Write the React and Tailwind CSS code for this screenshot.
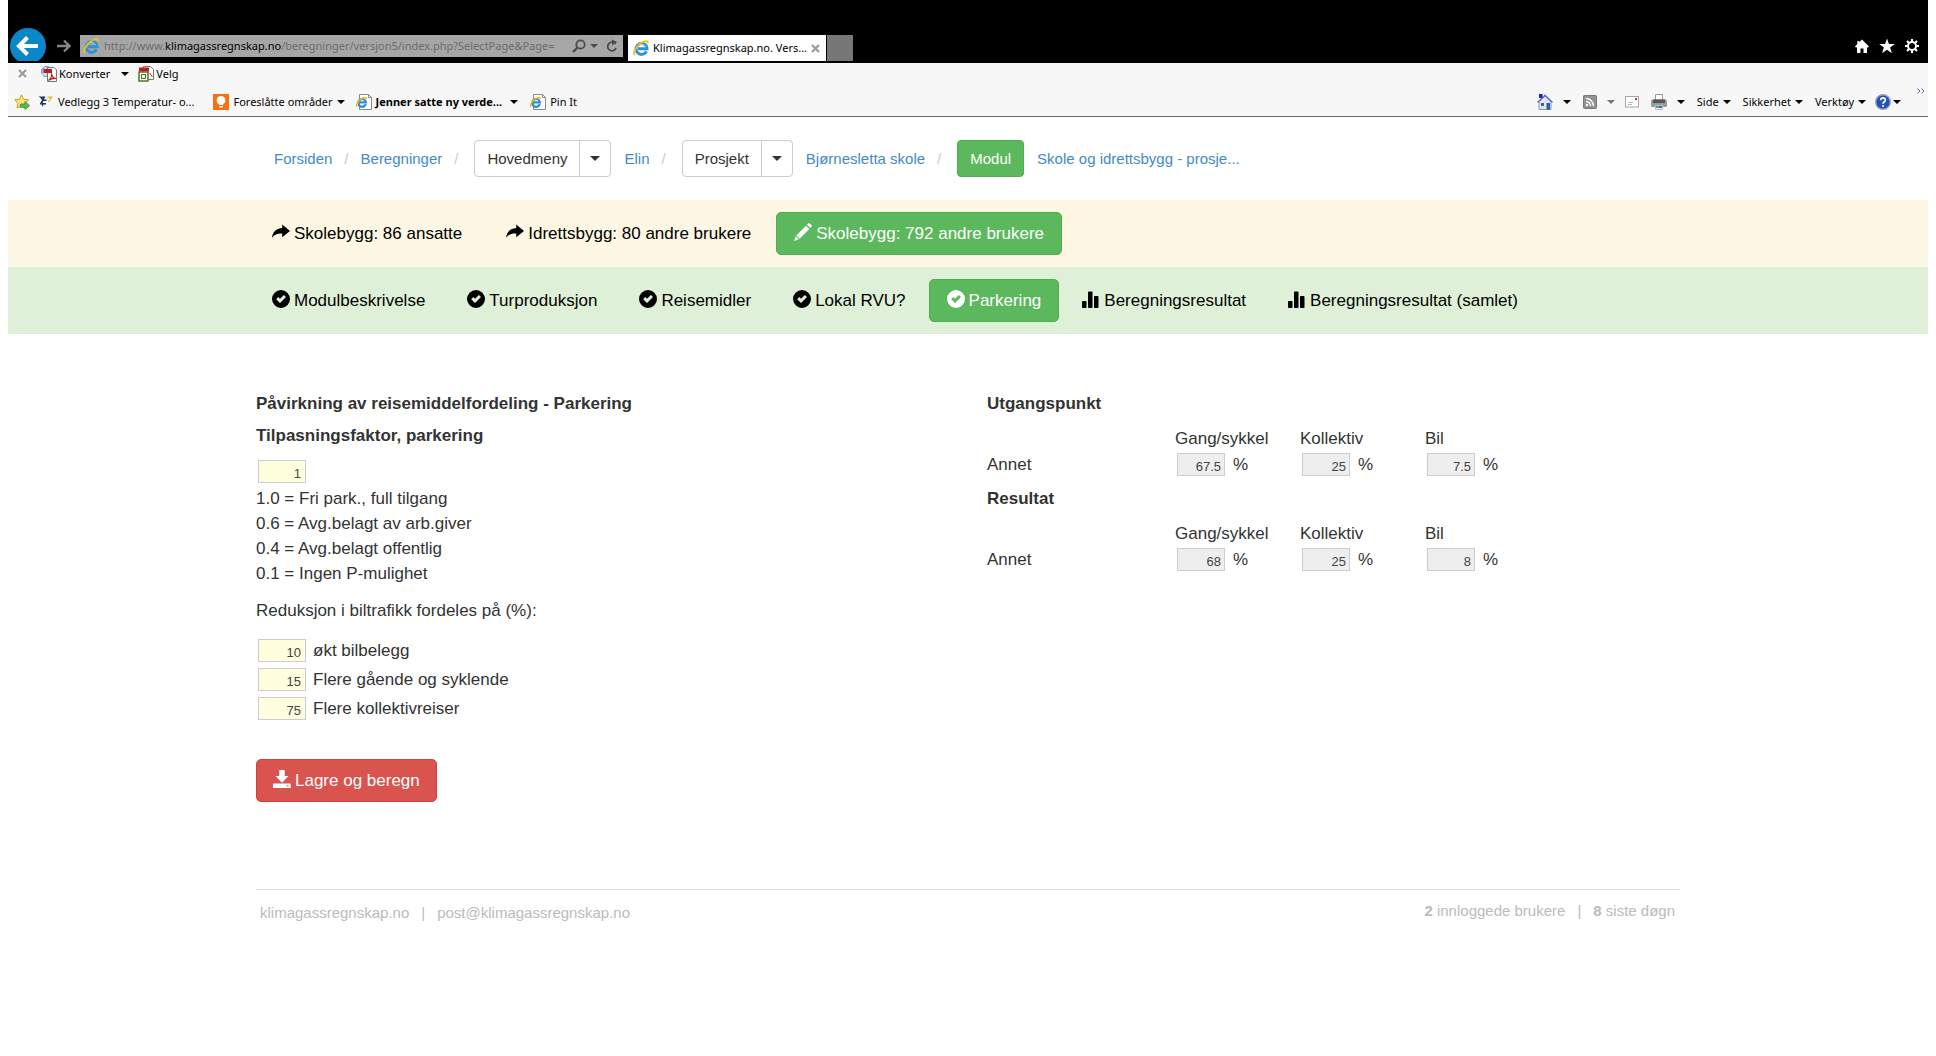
import { useState } from "react";

const moduleTabs = [
  { label: "Skolebygg: 86 ansatte", icon: ShareIcon },
  { label: "Idrettsbygg: 80 andre brukere", icon: ShareIcon },
  { label: "Skolebygg: 792 andre brukere", icon: PencilIcon, active: true },
];

const stepTabs = [
  { label: "Modulbeskrivelse", icon: CheckIcon },
  { label: "Turproduksjon", icon: CheckIcon },
  { label: "Reisemidler", icon: CheckIcon },
  { label: "Lokal RVU?", icon: CheckIcon },
  { label: "Parkering", icon: CheckIcon, active: true },
  { label: "Beregningsresultat", icon: StatsIcon },
  { label: "Beregningsresultat (samlet)", icon: StatsIcon },
];

const factorHelp = [
  "1.0 = Fri park., full tilgang",
  "0.6 = Avg.belagt av arb.giver",
  "0.4 = Avg.belagt offentlig",
  "0.1 = Ingen P-mulighet",
];

const reductionFields = [
  { id: "bilbelegg", label: "økt bilbelegg", value: "10" },
  { id: "gaende", label: "Flere gående og syklende", value: "15" },
  { id: "kollektiv", label: "Flere kollektivreiser", value: "75" },
];

const modes = ["Gang/sykkel", "Kollektiv", "Bil"];

/* ---------- icons ---------- */

function Glyph({ children }) {
  return (
    <svg viewBox="0 0 18 18" className="mb-[3px] h-[18px] w-[18px] shrink-0" fill="currentColor" aria-hidden="true">
      {children}
    </svg>
  );
}

function ShareIcon() {
  return (
    <Glyph>
      <path d="M10.2 1.500 18 8 10.2 14.200V10.6C5.6 10.4 2.6 11.4 0 14.800 .6 9.2 4 5.500 10.2 5Z" />
    </Glyph>
  );
}

function PencilIcon() {
  return (
    <Glyph>
      <path d="M14.3.4Q15 -.2 15.700.4L17.600 2.300Q18.200 3 17.600 3.700L16.200 5.100 12.900 1.800ZM12 2.700 15.300 6 5.600 15.700 2.300 12.400ZM1.700 13.200 4.800 16.300 0 18Z" />
    </Glyph>
  );
}

function CheckIcon() {
  return (
    <Glyph>
      <path
        fillRule="evenodd"
        d="M9 0A9 9 0 1 1 9 18 9 9 0 0 1 9 0ZM4.200 9.200 8 13 14 7 11.900 4.900 8 8.800 6.300 7.100Z"
      />
    </Glyph>
  );
}

function StatsIcon() {
  return (
    <Glyph>
      <rect x="0" y="11" width="4.500" height="7" rx=".8" />
      <rect x="6" y="1.500" width="4.500" height="16.500" rx=".8" />
      <rect x="12" y="6" width="4.500" height="12" rx=".8" />
    </Glyph>
  );
}

function SaveIcon() {
  return (
    <Glyph>
      <path d="M6.300 0H11.700V6H15.500L9 12.800 2.500 6H6.300Z" />
      <path fillRule="evenodd" d="M.5 13.500H17.500L18 18.200H0V14ZM13.500 15.300V16.300H15.500V15.300Z" />
    </Glyph>
  );
}

function Caret({ className = "text-black" }) {
  return (
    <svg viewBox="0 0 8 4" className={`h-1 w-2 shrink-0 ${className}`} fill="currentColor" aria-hidden="true">
      <path d="M0 0H8L4 4Z" />
    </svg>
  );
}

function IeLogo() {
  return (
    <svg viewBox="0 0 16 16" className="h-4 w-4 shrink-0" fill="none" aria-hidden="true">
      <path d="M13.400 11.400A5.500 5.500 0 1 1 14 8.800H5" stroke="#2e93d6" strokeWidth="3" />
      <path d="M12.800 7.200A4.700 4.700 0 0 0 4.400 6.500" stroke="#8ccdf2" strokeWidth="1" />
      <path d="M2.200 15C-.8 14 2.500 7.500 7 4 11 .8 15.200 -.2 14.800 3.400" stroke="#f5bd1a" strokeWidth="1.800" />
    </svg>
  );
}

function PageIcon() {
  return (
    <svg viewBox="0 0 16 16" className="h-4 w-4 shrink-0" fill="none" aria-hidden="true">
      <path d="M3.500.5H12.500L15.500 3.500V15.500H3.500Z" fill="#fff" stroke="#8b8b8b" />
      <path d="M12.500.5V3.500H15.500" stroke="#8b8b8b" />
      <path d="M9.800 10.200A3.900 3.900 0 1 1 10 8.300H3.500" stroke="#2e8fd4" strokeWidth="2.200" />
      <path d="M1 13C-.5 12 1.500 7.500 5 5.200 8 3 10.500 2.800 10.400 5" stroke="#f2b91d" strokeWidth="1.400" />
    </svg>
  );
}

function PdfConvertIcon() {
  return (
    <svg viewBox="0 0 16 16" className="h-4 w-4 shrink-0" fill="none" aria-hidden="true">
      <circle cx="5.500" cy="5.500" r="5" fill="#a9c5ea" stroke="#5f86bd" />
      <path d="M1 8H10M4 1V10" stroke="#e6effa" />
      <path d="M6.500 1.500H13L15.500 4V15.500H6.500Z" fill="#fff" stroke="#777" />
      <path d="M2.500 3H11V7H2.500Z" fill="#c4161c" />
      <path d="M7.500 14.500C10.500 12 11 9.500 10.500 7.500 11 11 13 12.300 15 12.500 12 11.800 10 12.700 7.500 14.500Z" stroke="#c4161c" strokeWidth="1.200" />
    </svg>
  );
}

function PdfSelectIcon() {
  return (
    <svg viewBox="0 0 16 16" className="h-4 w-4 shrink-0" fill="none" aria-hidden="true">
      <path d="M5.500.5H12.500L15.500 3.500V13.500H5.500Z" fill="#fff" stroke="#777" />
      <path d="M1 1.500H11V5.500H1Z" fill="#c4161c" />
      <path d="M11.500 7 14.500 11" stroke="#c4161c" />
      <rect x="1" y="6" width="9" height="9" fill="#fff" stroke="#4b7a25" strokeWidth="1.500" />
      <rect x="3.500" y="8.500" width="4" height="4" stroke="#4b7a25" />
    </svg>
  );
}

function FavoriteIcon() {
  return (
    <svg viewBox="0 0 16 16" className="h-4 w-4 shrink-0" aria-hidden="true">
      <path
        d="M7.500.8 9.600 5.300 14.500 5.800 11 9.300 12 14 7.500 11.800 3 14 4 9.300.6 5.800 5.400 5.300Z"
        fill="#fce37a"
        stroke="#d79a1c"
      />
      <path d="M6.500 10H11V7.500L15.600 11.700 11 15.500V13.300H6.500Z" fill="#5cc04b" stroke="#2c8a2c" strokeWidth=".8" />
    </svg>
  );
}

function VedleggIcon() {
  return (
    <svg viewBox="0 0 16 16" className="h-4 w-4 shrink-0" aria-hidden="true">
      <path d="M.5 2.500H7.500L6 5.500H8.500V7H5.500L4.500 9H8V10.500H5.500L4.500 13 3.800 10.500H2V9.500L4 6 2.500 4Z" fill="#23395b" />
      <path d="M10 2.500H15L11 8H9.800L12 4H9Z" fill="#e5b92c" />
    </svg>
  );
}

function BulbIcon() {
  return (
    <svg viewBox="0 0 16 16" className="h-4 w-4 shrink-0" aria-hidden="true">
      <rect width="16" height="16" fill="#f9700f" />
      <path d="M8 2A4.300 4.300 0 0 1 10.200 10V11H5.800V10A4.300 4.300 0 0 1 8 2ZM6.300 12H9.700V13.500H6.300Z" fill="#fff" />
    </svg>
  );
}

function HouseIcon() {
  return (
    <svg viewBox="0 0 16 16" className="h-4 w-4 shrink-0" aria-hidden="true">
      <path d="M2 8 8 2 14 8V15.500H2Z" fill="#dfe6f2" stroke="#8a97ad" />
      <path d="M.5 8.500 8 1.200 15.500 8.500" fill="none" stroke="#5d74c3" strokeWidth="1.500" />
      <path d="M2 0H5.500V4H2Z" fill="#2222bb" />
      <rect x="4" y="9" width="3" height="3" fill="#555f70" />
      <rect x="9.500" y="9" width="3.500" height="6.500" fill="#2460b0" />
    </svg>
  );
}

function FeedIcon() {
  return (
    <svg viewBox="0 0 14 14" className="h-[14px] w-[14px] shrink-0" fill="none" aria-hidden="true">
      <rect x=".5" y=".5" width="13" height="13" rx="1" fill="#929292" stroke="#777" />
      <path d="M3 6.500A4.500 4.500 0 0 1 7.500 11M3 3.500A7.500 7.500 0 0 1 10.500 11" stroke="#fff" strokeWidth="1.400" />
      <circle cx="4" cy="10" r="1.200" fill="#fff" />
    </svg>
  );
}

function MailIcon() {
  return (
    <svg viewBox="0 0 14 12" className="h-3 w-[14px] shrink-0" fill="none" aria-hidden="true">
      <rect x=".5" y=".5" width="13" height="10.500" fill="#fff" stroke="#a5a5a5" />
      <rect x="10" y="2" width="2" height="2" fill="#d8262b" />
      <path d="M3 6.500H8M3 8.500H7" stroke="#b8b8b8" />
    </svg>
  );
}

function PrinterIcon() {
  return (
    <svg viewBox="0 0 16 16" className="h-4 w-4 shrink-0" aria-hidden="true">
      <path d="M4.500.5H11.500V6H4.500Z" fill="#fff" stroke="#999" />
      <rect x="0" y="5.500" width="16" height="7.500" rx="1.500" fill="#9a9a9a" />
      <rect x="2" y="5.500" width="12" height="3.500" fill="#555" />
      <path d="M4.500 11.500H11.500V15.500H4.500Z" fill="#fff" stroke="#bbb" />
      <path d="M5 12H8V14H5Z" fill="#3fae79" />
      <path d="M8 12H11V14H8Z" fill="#3a6fd0" />
    </svg>
  );
}

function HelpIcon() {
  return (
    <svg viewBox="0 0 16 16" className="h-4 w-4 shrink-0" fill="none" aria-hidden="true">
      <circle cx="8" cy="8" r="7.300" fill="#2350b8" stroke="#9aa3b5" strokeWidth="1.400" />
      <path d="M5.700 6.200C5.700 3.200 10.400 3.300 10.400 6 10.400 7.700 8 7.800 8 9.700" stroke="#fff" strokeWidth="1.700" />
      <circle cx="8" cy="12" r="1.100" fill="#fff" />
    </svg>
  );
}

function CloseIcon() {
  return (
    <svg viewBox="0 0 9 9" className="h-[9px] w-[9px] shrink-0" stroke="#9b9b9b" strokeWidth="2.200" aria-hidden="true">
      <path d="M1 1 8 8M8 1 1 8" />
    </svg>
  );
}

/* ---------- browser window ---------- */

function TitleBar() {
  return (
    <div className="flex h-[63px] items-end bg-black pb-[2px] pl-[2px] pr-[9px]">
      <button type="button" aria-label="Tilbake">
        <svg viewBox="0 0 36 33" className="h-[33px] w-9" fill="none">
          <circle cx="18" cy="18" r="18" fill="#0a87c9" />
          <path d="M28 18H10M17.500 9.500 9 18 17.500 26.500" stroke="#fff" strokeWidth="4" />
        </svg>
      </button>
      <button type="button" aria-label="Frem" className="mb-2 ml-[11px]">
        <svg viewBox="0 0 14 14" className="h-[14px] w-[14px]" fill="none">
          <path d="M0 7H12M7 1.500 12.500 7 7 12.500" stroke="#858585" strokeWidth="2.400" />
        </svg>
      </button>
      <div className="mb-1 ml-[9px] flex h-[22px] w-[543px] items-center bg-[#a6a6a6] pl-[3px] pr-[5px]">
        <IeLogo />
        <div
          role="textbox"
          aria-label="Adresse"
          className="ml-[5px] min-w-0 flex-1 overflow-hidden whitespace-nowrap text-[11px] leading-5 text-[#6d6d6d]"
        >
          http://www.<span className="text-black">klimagassregnskap.no</span>
          /beregninger/versjon5/index.php?SelectPage&amp;Page=
        </div>
        <button type="button" aria-label="Søk" className="ml-[5px]">
          <svg viewBox="0 0 14 14" className="h-[14px] w-[14px]" fill="none" stroke="#4b4b4b">
            <circle cx="8.500" cy="5.500" r="4.200" strokeWidth="1.800" />
            <path d="M5.500 8.500 1 13" strokeWidth="2.400" />
          </svg>
        </button>
        <button type="button" aria-label="Vis adresser" className="ml-1">
          <Caret className="text-[#4b4b4b]" />
        </button>
        <button type="button" aria-label="Oppdater" className="ml-2">
          <svg viewBox="0 0 12 14" className="h-[14px] w-3" fill="none">
            <path d="M9.500 5A4.300 4.300 0 1 0 10 9" stroke="#4b4b4b" strokeWidth="1.800" />
            <path d="M6 .5V6.500L11 3Z" fill="#4b4b4b" />
          </svg>
        </button>
      </div>
      <div className="ml-[5px] flex h-[26px] w-[198px] items-center bg-white pl-[5px] pr-[6px]">
        <IeLogo />
        <span className="ml-1 flex-1 whitespace-nowrap text-[11px] leading-5 text-black">
          Klimagassregnskap.no. Vers...
        </span>
        <button type="button" aria-label="Lukk fane">
          <CloseIcon />
        </button>
      </div>
      <button type="button" aria-label="Ny fane" className="ml-px h-[26px] w-[26px] bg-[#777]" />
      <div className="mb-[7px] ml-auto flex items-center gap-[10px] text-white">
        <button type="button" aria-label="Hjem">
          <svg viewBox="0 0 14 14" className="h-[14px] w-[14px]" fill="currentColor">
            <path d="M7 .5 14 7.500 12.800 8.800 12 8V14H8.500V9.500H5.500V14H2V8L1.200 8.800 0 7.500 2.300 5V2H4.300V3.200Z" />
          </svg>
        </button>
        <button type="button" aria-label="Favoritter">
          <svg viewBox="0 0 16 16" className="h-4 w-4" fill="currentColor">
            <path d="M8 .5 9.900 6H15.800L11.100 9.500 12.900 15.200 8 11.700 3.100 15.200 4.900 9.500.2 6H6.100Z" />
          </svg>
        </button>
        <button type="button" aria-label="Innstillinger">
          <svg viewBox="0 0 14 14" className="h-[14px] w-[14px]" fill="none" stroke="currentColor">
            <circle cx="7" cy="7" r="4" strokeWidth="2" />
            <path
              d="M7 0V2.500M7 11.500V14M0 7H2.500M11.500 7H14M2 2 3.800 3.800M10.200 10.200 12 12M12 2 10.200 3.800M3.800 10.200 2 12"
              strokeWidth="2"
            />
          </svg>
        </button>
      </div>
    </div>
  );
}

function BrowserToolbars() {
  return (
    <div className="border-b border-[#696969] bg-[#f7f7f7] text-[11px] leading-4 text-black">
      <div className="flex h-[21px] items-center pl-[10px]">
        <button type="button" aria-label="Lukk verktøylinje">
          <CloseIcon />
        </button>
        <button type="button" className="ml-[14px] flex items-center gap-[2px]">
          <PdfConvertIcon />
          Konverter
          <span className="ml-[9px]">
            <Caret />
          </span>
        </button>
        <button type="button" className="ml-[9px] flex items-center gap-[2px]">
          <PdfSelectIcon />
          Velg
        </button>
      </div>
      <div className="flex h-8 items-center pl-[6px] pt-1">
        <button type="button" aria-label="Legg til favoritt">
          <FavoriteIcon />
        </button>
        <a href="#vedlegg" className="ml-2 flex items-center gap-1">
          <VedleggIcon />
          Vedlegg 3 Temperatur- o...
        </a>
        <button type="button" className="ml-[19px] flex items-center gap-1">
          <BulbIcon />
          Foreslåtte områder
          <Caret />
        </button>
        <button type="button" className="ml-[11px] flex items-center gap-1 font-bold">
          <PageIcon />
          Jenner satte ny verde...
          <span className="ml-1">
            <Caret />
          </span>
        </button>
        <a href="#pin" className="ml-3 flex items-center gap-1">
          <PageIcon />
          Pin It
        </a>

        <div className="ml-auto flex h-full items-center pr-[3px]">
          <button type="button" aria-label="Startside" className="flex items-center gap-[10px]">
            <HouseIcon />
            <Caret />
          </button>
          <button type="button" aria-label="Feeder" className="ml-3 flex items-center gap-[10px]">
            <FeedIcon />
            <Caret className="text-[#777]" />
          </button>
          <button type="button" aria-label="Les e-post" className="ml-[10px]">
            <MailIcon />
          </button>
          <button type="button" aria-label="Skriv ut" className="ml-3 flex items-center gap-[10px]">
            <PrinterIcon />
            <Caret />
          </button>
          <button type="button" className="ml-3 flex items-center gap-1">
            Side
            <Caret />
          </button>
          <button type="button" className="ml-3 flex items-center gap-1">
            Sikkerhet
            <Caret />
          </button>
          <button type="button" className="ml-3 flex items-center gap-1">
            Verktøy
            <Caret />
          </button>
          <button type="button" aria-label="Hjelp" className="ml-[9px] flex items-center gap-[2px]">
            <HelpIcon />
            <Caret />
          </button>
          <button type="button" aria-label="Flere kommandoer" className="ml-4 self-start">
            <svg viewBox="0 0 8 6" className="h-[6px] w-2" fill="none" stroke="#6d6db5">
              <path d="M.5.5 3 3 .5 5.500M4.500.5 7 3 4.500 5.500" />
            </svg>
          </button>
        </div>
      </div>
    </div>
  );
}

/* ---------- page ---------- */

function Slash() {
  return <span className="px-3 text-[#ccc]">/</span>;
}

function SplitButton({ label }) {
  return (
    <div className="ml-1 mr-[13px] flex h-[37px] rounded border border-[#ccc] bg-white text-[#333]">
      <button type="button" className="px-3">
        {label}
      </button>
      <button type="button" aria-label={`Åpne ${label}`} className="flex items-center border-l border-[#ccc] px-[10px]">
        <svg viewBox="0 0 10 5" className="h-[5px] w-[10px]" fill="currentColor">
          <path d="M0 0H10L5 5Z" />
        </svg>
      </button>
    </div>
  );
}

function Breadcrumb() {
  return (
    <nav className="mx-auto flex h-[83px] w-full max-w-[1424px] items-center pl-[18px] text-[15px] leading-[21px] text-[#428bca]">
      <a href="#forsiden">Forsiden</a>
      <Slash />
      <a href="#beregninger">Beregninger</a>
      <Slash />
      <SplitButton label="Hovedmeny" />
      <a href="#elin">Elin</a>
      <Slash />
      <SplitButton label="Prosjekt" />
      <a href="#skole">Bjørnesletta skole</a>
      <Slash />
      <button type="button" className="ml-1 mr-[13px] h-[37px] rounded border border-[#4cae4c] bg-[#5cb85c] px-3 text-white">
        Modul
      </button>
      <a href="#modul">Skole og idrettsbygg - prosje...</a>
    </nav>
  );
}

function TabBar({ tabs, className, gap }) {
  return (
    <div className={className}>
      <nav className={`mx-auto flex h-[67px] w-full max-w-[1430px] items-center ${gap}`}>
        {tabs.map(({ label, icon: Icon, active }) => (
          <a
            key={label}
            href="#tab"
            aria-current={active ? "page" : undefined}
            className={
              active
                ? "flex h-[43px] items-center gap-1 rounded-[5px] border border-[#4cae4c] bg-[#5cb85c] px-[17px] text-white"
                : "flex h-[43px] items-center gap-1 border border-transparent px-[18px] text-black"
            }
          >
            <Icon />
            {label}
          </a>
        ))}
      </nav>
    </div>
  );
}

function NumberField({ id, value, onChange }) {
  return (
    <input
      id={id}
      type="text"
      value={value}
      onChange={(e) => onChange(e.target.value)}
      className="ml-[2px] block h-[23px] w-12 border border-[#ccc] bg-[#ffffe0] pr-1 pt-1 text-right text-[13px] leading-4 text-[#444]"
    />
  );
}

function ParkingForm() {
  const [factor, setFactor] = useState("1");
  const [fields, setFields] = useState(reductionFields);

  const updateField = (id, value) =>
    setFields(fields.map((f) => (f.id === id ? { ...f, value } : f)));

  return (
    <form onSubmit={(e) => e.preventDefault()}>
      <h1 className="font-bold">Påvirkning av reisemiddelfordeling - Parkering</h1>
      <label htmlFor="faktor" className="mb-3 mt-[7px] block font-bold">
        Tilpasningsfaktor, parkering
      </label>
      <NumberField id="faktor" value={factor} onChange={setFactor} />
      <div className="mt-[3px]">
        {factorHelp.map((line) => (
          <p key={line}>{line}</p>
        ))}
      </div>
      <p className="mb-[13px] mt-3">Reduksjon i biltrafikk fordeles på (%):</p>
      {fields.map((field) => (
        <div key={field.id} className="flex h-[29px] items-center gap-[7px]">
          <NumberField id={field.id} value={field.value} onChange={(v) => updateField(field.id, v)} />
          <label htmlFor={field.id}>{field.label}</label>
        </div>
      ))}
      <button
        type="submit"
        className="mt-9 flex h-[43px] items-center gap-1 rounded-[5px] border border-[#d43f3a] bg-[#d9534f] px-4 text-white"
      >
        <SaveIcon />
        Lagre og beregn
      </button>
    </form>
  );
}

function ShareTable({ title, values }) {
  return (
    <section className="mb-2">
      <h2 className="mb-[10px] font-bold">{title}</h2>
      <table className="w-[562px] table-fixed border-collapse text-left">
        <thead>
          <tr className="h-[25px]">
            <td className="w-[187px] p-0" />
            {modes.map((mode) => (
              <th key={mode} scope="col" className="w-[125px] p-0 pl-px font-normal">
                {mode}
              </th>
            ))}
          </tr>
        </thead>
        <tbody>
          <tr className="h-[27px]">
            <th scope="row" className="p-0 font-normal">
              Annet
            </th>
            {values.map((value, i) => (
              <td key={modes[i]} className="p-0">
                <div className="flex items-center gap-2 pl-[3px]">
                  <input
                    type="text"
                    readOnly
                    value={value}
                    aria-label={`${title} ${modes[i]}`}
                    className="block h-[23px] w-12 border border-[#ccc] bg-[#eee] pr-[3px] pt-1 text-right text-[13px] leading-4 text-[#444]"
                  />
                  %
                </div>
              </td>
            ))}
          </tr>
        </tbody>
      </table>
    </section>
  );
}

function Footer() {
  return (
    <footer className="mt-[87px] flex justify-between border-t border-[#ddd] pl-1 pr-[5px] text-[15px] leading-[21px] text-[#bbb]">
      <div className="flex gap-3 pt-3">
        <a href="#hjem">klimagassregnskap.no</a>
        <span>|</span>
        <a href="mailto:post@klimagassregnskap.no">post@klimagassregnskap.no</a>
      </div>
      <div className="flex gap-3 pt-[10px]">
        <span>
          <b>2</b> innloggede brukere
        </span>
        <span>|</span>
        <span>
          <b>8</b> siste døgn
        </span>
      </div>
    </footer>
  );
}

export default function App() {
  return (
    <div className="min-h-screen bg-white px-2">
      <header className="font-['Noto_Sans',sans-serif]">
        <TitleBar />
        <BrowserToolbars />
      </header>
      <div className="font-['Liberation_Sans',Arial,sans-serif] text-[17px] leading-[25px] text-[#333]">
        <Breadcrumb />
        <TabBar tabs={moduleTabs} className="bg-[#fdf7e3]" gap="gap-[6px]" />
        <TabBar tabs={stepTabs} className="bg-[#dff0d8]" gap="gap-1" />
        <main className="mx-auto w-full max-w-[1424px] pt-[57px]">
          <div className="grid grid-cols-2">
            <ParkingForm />
            <div className="pl-[19px]">
              <ShareTable title="Utgangspunkt" values={["67.5", "25", "7.5"]} />
              <ShareTable title="Resultat" values={["68", "25", "8"]} />
            </div>
          </div>
          <Footer />
        </main>
      </div>
    </div>
  );
}
